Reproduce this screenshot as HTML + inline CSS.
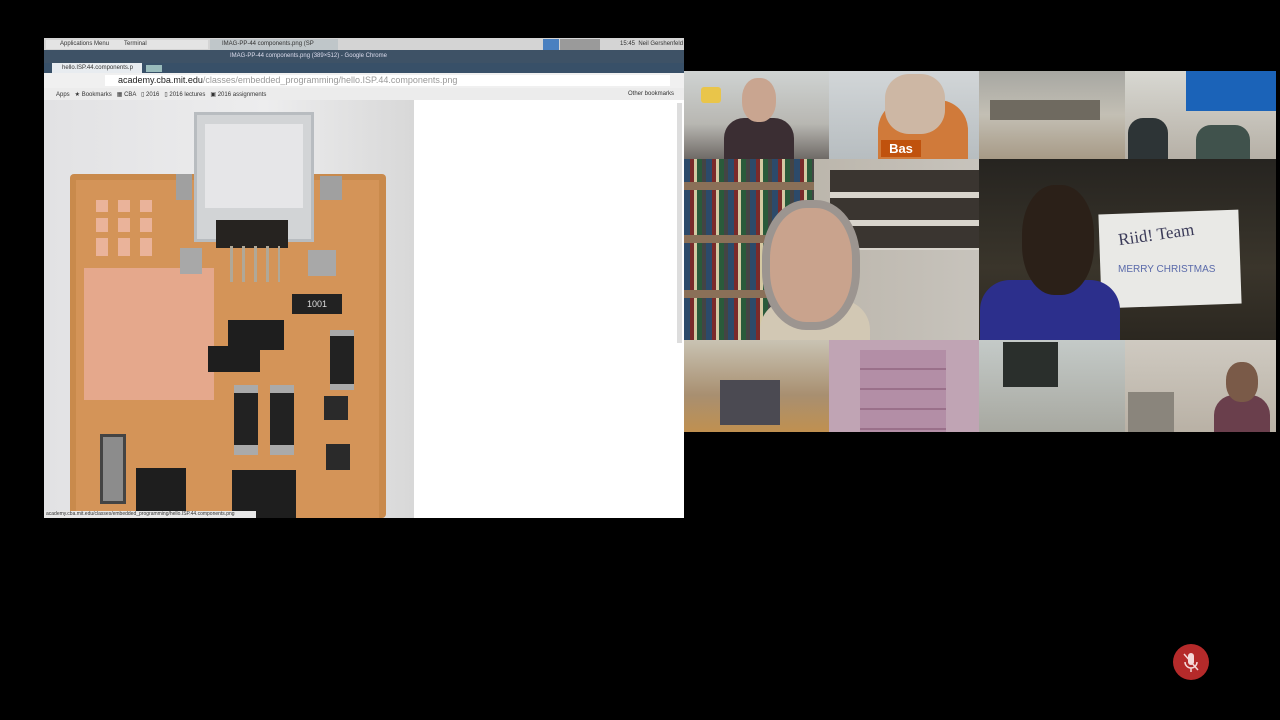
<!DOCTYPE html>
<html><head><meta charset="utf-8"><style>
*{margin:0;padding:0;box-sizing:border-box}
body{width:1280px;height:720px;background:#000;position:relative;overflow:hidden;font-family:"Liberation Sans",sans-serif}
div{position:absolute}
.t{font-size:6px;color:#333;white-space:nowrap}
</style></head><body>
<!-- browser -->
<div style="left:44px;top:38px;width:640px;height:12px;background:#d4d4d4"></div>
<div style="left:46px;top:40px;width:162px;height:9px;background:#e4e4e4"></div>
<div class="t" style="left:60px;top:41px">Applications Menu</div>
<div class="t" style="left:124px;top:41px">Terminal</div>
<div style="left:210px;top:39px;width:128px;height:11px;background:#bfc6c9"></div>
<div class="t" style="left:222px;top:41px">IMAG-PP-44 components.png (SP</div>
<div style="left:543px;top:39px;width:16px;height:11px;background:#4a80c0"></div>
<div style="left:560px;top:39px;width:40px;height:11px;background:#9a9a9a"></div>
<div class="t" style="left:620px;top:41px">15:45 &nbsp;Neil Gershenfeld</div>
<div style="left:44px;top:50px;width:640px;height:13px;background:#3e5266"></div>
<div class="t" style="left:230px;top:53px;color:#dde">IMAG-PP-44 components.png (389×512) - Google Chrome</div>
<div style="left:44px;top:63px;width:640px;height:10px;background:#385068"></div>
<div style="left:52px;top:63px;width:90px;height:10px;background:#e8ecf0"></div>
<div class="t" style="left:62px;top:65px">hello.ISP.44.components.p</div>
<div style="left:146px;top:65px;width:16px;height:7px;background:#9bb"></div>
<div style="left:44px;top:73px;width:640px;height:15px;background:#f0f0f0"></div>
<div style="left:105px;top:75px;width:565px;height:11px;background:#fff"></div>
<div style="left:118px;top:75px;font-size:9px;color:#222;white-space:nowrap">academy.cba.mit.edu<span style="color:#999">/classes/embedded_programming/hello.ISP.44.components.png</span></div>
<div style="left:44px;top:88px;width:640px;height:12px;background:#ececec"></div>
<div class="t" style="left:56px;top:91px">Apps &nbsp; ★ Bookmarks &nbsp; ▦ CBA &nbsp; ▯ 2016 &nbsp; ▯ 2016 lectures &nbsp; ▣ 2016 assignments</div>
<div class="t" style="left:628px;top:91px">Other bookmarks</div>
<div style="left:44px;top:100px;width:370px;height:418px;background:linear-gradient(90deg,#e2e2e4,#ededee 60%,#d8d8d8)"></div>
<div style="left:414px;top:100px;width:270px;height:418px;background:#fff"></div>
<div style="left:677px;top:103px;width:5px;height:240px;background:#ddd"></div>
<!-- PCB -->
<div style="left:70px;top:174px;width:316px;height:344px;background:#c98a4c;border-radius:4px"></div>
<div style="left:76px;top:180px;width:303px;height:338px;background:#d49458"></div>
<div style="left:84px;top:268px;width:130px;height:132px;background:#e5a88c"></div>
<div style="left:96px;top:200px;width:58px;height:56px;background:repeating-linear-gradient(90deg,#eab39a 0 12px,transparent 12px 22px),#d49458"></div>
<div style="left:96px;top:212px;width:58px;height:6px;background:#d49458"></div>
<div style="left:96px;top:232px;width:58px;height:6px;background:#d49458"></div>
<div style="left:194px;top:112px;width:120px;height:130px;background:#d2d4d6;border:3px solid #b8bcc0"></div>
<div style="left:205px;top:124px;width:98px;height:84px;background:#e6e6e8"></div>
<div style="left:216px;top:220px;width:72px;height:28px;background:#262320"></div>
<div style="left:230px;top:246px;width:50px;height:36px;background:repeating-linear-gradient(90deg,#b0a898 0 3px,transparent 3px 12px)"></div>
<div style="left:180px;top:248px;width:22px;height:26px;background:#a8a8a8"></div>
<div style="left:308px;top:250px;width:28px;height:26px;background:#a8a8a8"></div>
<div style="left:176px;top:174px;width:16px;height:26px;background:#a0a0a0"></div>
<div style="left:320px;top:176px;width:22px;height:24px;background:#a0a0a0"></div>
<div style="left:292px;top:294px;width:50px;height:20px;background:#222;color:#ddd;font-size:9px;text-align:center;line-height:20px">1001</div>
<div style="left:330px;top:330px;width:24px;height:60px;background:#222;border-top:6px solid #aaa;border-bottom:6px solid #aaa"></div>
<div style="left:228px;top:320px;width:56px;height:30px;background:#1e1e1e"></div>
<div style="left:208px;top:346px;width:52px;height:26px;background:#1e1e1e"></div>
<div style="left:234px;top:385px;width:24px;height:70px;background:#222;border-top:8px solid #aaa;border-bottom:10px solid #aaa"></div>
<div style="left:270px;top:385px;width:24px;height:70px;background:#222;border-top:8px solid #aaa;border-bottom:10px solid #aaa"></div>
<div style="left:324px;top:396px;width:24px;height:24px;background:#2a2a2a"></div>
<div style="left:326px;top:444px;width:24px;height:26px;background:#2a2a2a"></div>
<div style="left:100px;top:434px;width:26px;height:70px;background:#8c8c8c;border:3px solid #444"></div>
<div style="left:136px;top:468px;width:50px;height:50px;background:#1e1e1e"></div>
<div style="left:232px;top:470px;width:64px;height:48px;background:#1e1e1e"></div>
<div style="left:44px;top:511px;width:212px;height:7px;background:#e8e8e8"></div>
<div class="t" style="left:46px;top:511px;font-size:5px">academy.cba.mit.edu/classes/embedded_programming/hello.ISP.44.components.png</div>
<!-- video grid -->
<div style="left:684px;top:71px;width:145px;height:88px;background:linear-gradient(180deg,#cfd3d2,#b8b7b2 60%,#6f6a66)"></div>
<div style="left:724px;top:118px;width:70px;height:41px;background:#3b2e33;border-radius:20px 20px 0 0"></div>
<div style="left:742px;top:78px;width:34px;height:44px;background:#c9a590;border-radius:45%"></div>
<div style="left:701px;top:87px;width:20px;height:16px;background:#e9c54a;border-radius:3px"></div>
<div style="left:829px;top:71px;width:150px;height:88px;background:linear-gradient(180deg,#d2d6d8,#b7bdc0)"></div>
<div style="left:878px;top:100px;width:90px;height:59px;background:#d07a3a;border-radius:30px 30px 0 0"></div>
<div style="left:885px;top:74px;width:60px;height:60px;background:#cdb7a4;border-radius:40%"></div>
<div style="left:881px;top:140px;width:40px;height:17px;background:#c0520d;color:#fff;font-size:13px;font-weight:bold;line-height:17px;text-align:center">Bas</div>
<div style="left:979px;top:71px;width:146px;height:88px;background:linear-gradient(180deg,#a7a7a2,#c3bfb4 50%,#a79a86)"></div>
<div style="left:990px;top:100px;width:110px;height:20px;background:#6f6a60"></div>
<div style="left:1125px;top:71px;width:151px;height:88px;background:linear-gradient(180deg,#d8d8d2,#b6b0a6)"></div>
<div style="left:1186px;top:71px;width:90px;height:40px;background:#1b63b8"></div>
<div style="left:1128px;top:118px;width:40px;height:41px;background:#2d3436;border-radius:15px 15px 0 0"></div>
<div style="left:1196px;top:125px;width:54px;height:34px;background:#40524c;border-radius:15px 15px 0 0"></div>
<div style="left:684px;top:159px;width:295px;height:181px;background:linear-gradient(90deg,#5a4e45 0,#7a6e62 28%,#b9b3a8 30%,#c7c3bc 100%)"></div>
<div style="left:684px;top:159px;width:130px;height:181px;background:repeating-linear-gradient(90deg,#2c4a6a 0 6px,#7a2a2a 6px 10px,#d4c9a2 10px 13px,#2a5a3a 13px 18px,#444 18px 22px)"></div>
<div style="left:684px;top:182px;width:130px;height:8px;background:#8a7058"></div>
<div style="left:684px;top:235px;width:130px;height:8px;background:#8a7058"></div>
<div style="left:684px;top:290px;width:130px;height:8px;background:#8a7058"></div>
<div style="left:830px;top:170px;width:149px;height:80px;background:repeating-linear-gradient(180deg,#3a3530 0 22px,#d8d4cc 22px 28px)"></div>
<div style="left:760px;top:300px;width:110px;height:40px;background:#d2c8b4;border-radius:30px 30px 0 0"></div>
<div style="left:762px;top:200px;width:98px;height:130px;background:#c9a38d;border-radius:45%;border:8px solid #9c9590"></div>
<div style="left:979px;top:159px;width:297px;height:181px;background:linear-gradient(180deg,#262420,#3a352b 60%,#2b2720)"></div>
<div style="left:1100px;top:212px;width:140px;height:94px;background:#e9e9e6;transform:rotate(-2deg)"></div>
<div style="left:1118px;top:225px;font-size:17px;color:#3a3a58;font-family:'Liberation Serif',serif;transform:rotate(-8deg)">Riid! Team</div>
<div style="left:1118px;top:264px;font-size:10px;color:#5a6aaa">MERRY CHRISTMAS</div>
<div style="left:980px;top:280px;width:140px;height:60px;background:#2c2f8c;border-radius:30px 30px 0 0"></div>
<div style="left:1022px;top:185px;width:72px;height:110px;background:#2b2018;border-radius:45%"></div>
<div style="left:684px;top:340px;width:145px;height:92px;background:linear-gradient(180deg,#c9c3b3,#a88f70 60%,#c09050)"></div>
<div style="left:720px;top:380px;width:60px;height:45px;background:#4b4a52"></div>
<div style="left:829px;top:340px;width:150px;height:92px;background:#c0a4b4"></div>
<div style="left:860px;top:350px;width:86px;height:82px;background:repeating-linear-gradient(180deg,#b38ea6 0 18px,#9a708a 18px 20px)"></div>
<div style="left:979px;top:340px;width:146px;height:92px;background:linear-gradient(180deg,#c4cac8,#a7a8a0)"></div>
<div style="left:1003px;top:342px;width:55px;height:45px;background:#2a2f2c"></div>
<div style="left:1125px;top:340px;width:151px;height:92px;background:linear-gradient(180deg,#cfcac1,#b9b1a5)"></div>
<div style="left:1128px;top:392px;width:46px;height:40px;background:#8a857c"></div>
<div style="left:1214px;top:395px;width:56px;height:37px;background:#6a3f4c;border-radius:20px 20px 0 0"></div>
<div style="left:1226px;top:362px;width:32px;height:40px;background:#7a5a48;border-radius:45%"></div>
<!-- mic -->
<div style="left:1173px;top:644px;width:36px;height:36px;border-radius:50%;background:#b52a2a"></div>
<svg style="position:absolute;left:1173px;top:644px" width="36" height="36"><rect x="15" y="9" width="6" height="12" rx="3" fill="#f4dada"/><path d="M12 18a6 6 0 0 0 12 0M18 24v4" stroke="#f4dada" stroke-width="1.5" fill="none"/><path d="M11 10l14 16" stroke="#f4dada" stroke-width="1.5"/></svg>
</body></html>
